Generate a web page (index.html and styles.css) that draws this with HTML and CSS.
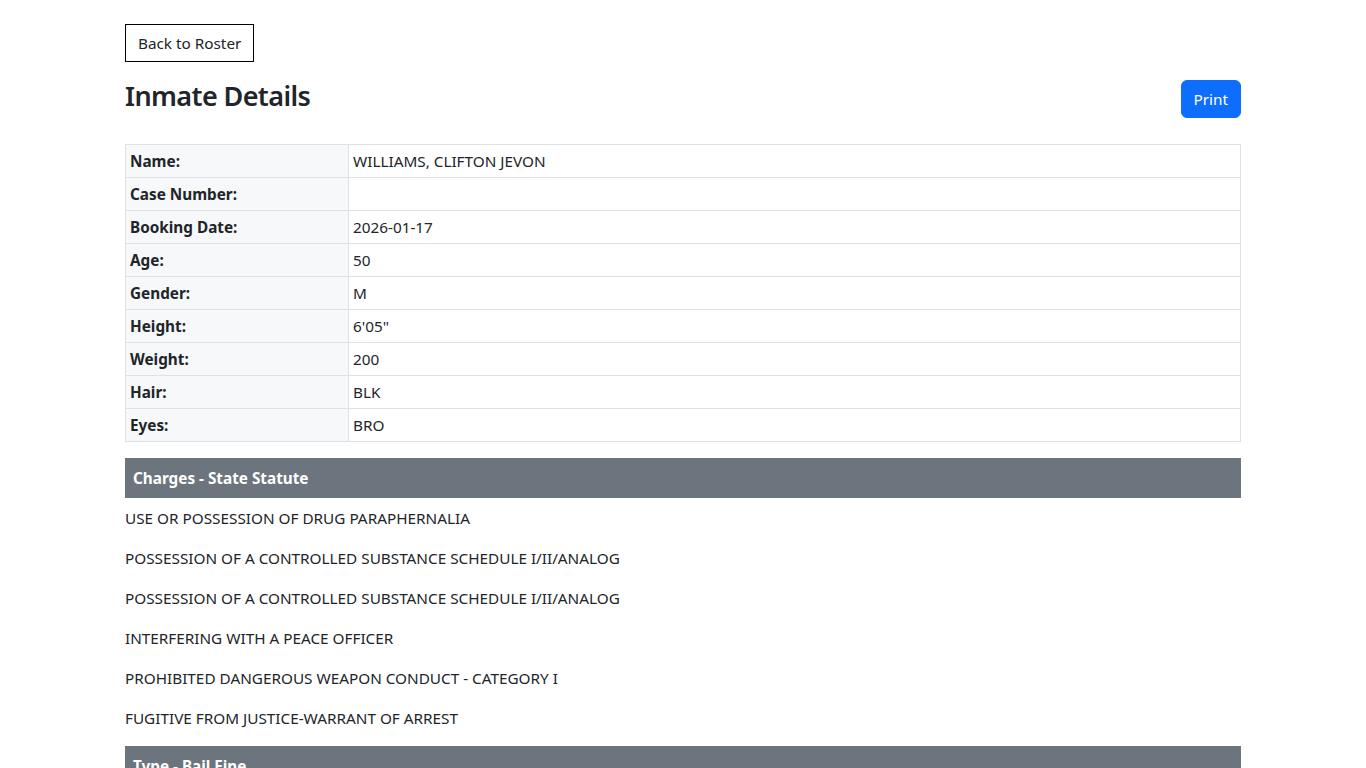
FILE: index.html
```html
<!DOCTYPE html>
<html lang="en">
<head>
  <meta charset="UTF-8" />
  <meta name="viewport" content="width=device-width, initial-scale=1.0" />
  <title>Inmate Details</title>
  <link rel="stylesheet" href="styles.css">
</head>
<body>
  <div class="container">
    <a class="btn btn-back" href="#">Back to Roster</a>

    <div class="title-row">
      <h1>Inmate Details</h1>
      <button class="btn btn-print" onclick="window.print()">Print</button>
    </div>

    <table class="details">
      <tr><th>Name:</th><td>WILLIAMS, CLIFTON JEVON</td></tr>
      <tr><th>Case Number:</th><td></td></tr>
      <tr><th>Booking Date:</th><td>2026-01-17</td></tr>
      <tr><th>Age:</th><td>50</td></tr>
      <tr><th>Gender:</th><td>M</td></tr>
      <tr><th>Height:</th><td>6'05"</td></tr>
      <tr><th>Weight:</th><td>200</td></tr>
      <tr><th>Hair:</th><td>BLK</td></tr>
      <tr><th>Eyes:</th><td>BRO</td></tr>
    </table>

    <div class="section-head">Charges - State Statute</div>
    <div class="charges">
      <p>USE OR POSSESSION OF DRUG PARAPHERNALIA</p>
      <p>POSSESSION OF A CONTROLLED SUBSTANCE SCHEDULE I/II/ANALOG</p>
      <p>POSSESSION OF A CONTROLLED SUBSTANCE SCHEDULE I/II/ANALOG</p>
      <p>INTERFERING WITH A PEACE OFFICER</p>
      <p>PROHIBITED DANGEROUS WEAPON CONDUCT - CATEGORY I</p>
      <p>FUGITIVE FROM JUSTICE-WARRANT OF ARREST</p>
    </div>

    <div class="section-head">Type - Bail Fine</div>
    <div class="charges">
      <p>CASH BOND</p>
    </div>
  </div>
</body>
</html>
```

FILE: styles.css
```css
* {
  box-sizing: border-box;
}
body {
  margin: 0;
  font-family: "Segoe UI", "Noto Sans", Arial, sans-serif;
  font-size: 15.3px;
  line-height: 24px;
  color: #212529;
  background: #fff;
}
.container {
  max-width: 1140px;
  margin: 0 auto;
  padding: 24px 12px 0;
}
.btn {
  display: inline-block;
  padding: 6px 12px;
  font-family: inherit;
  font-size: 15.3px;
  line-height: 24px;
  text-decoration: none;
  cursor: pointer;
}
.btn-back {
  color: #212529;
  border: 1px solid #000;
  background: #fff;
}
.title-row {
  display: flex;
  justify-content: space-between;
  align-items: flex-start;
  margin-top: 18px;
  margin-bottom: 26px;
}
.title-row h1 {
  margin: 0;
  font-size: 27px;
  font-weight: 600;
  letter-spacing: -0.6px;
  line-height: 1.2;
}
.btn-print {
  color: #fff;
  background: #0d6efd;
  border: 1px solid #0d6efd;
  border-radius: 6px;
}
.details {
  width: 100%;
  border-collapse: collapse;
  margin-bottom: 16px;
}
.details th,
.details td {
  border: 1px solid #dee2e6;
  padding: 4px;
  text-align: left;
  height: 33px;
}
.details th {
  width: 20%;
  font-weight: 700;
  background: #f6f8fa;
}
.section-head {
  background: #6c757d;
  color: #fff;
  font-weight: 700;
  padding: 8px;
}
.charges {
  padding-top: 8px;
}
.charges p {
  margin: 0 0 16px;
}
```
